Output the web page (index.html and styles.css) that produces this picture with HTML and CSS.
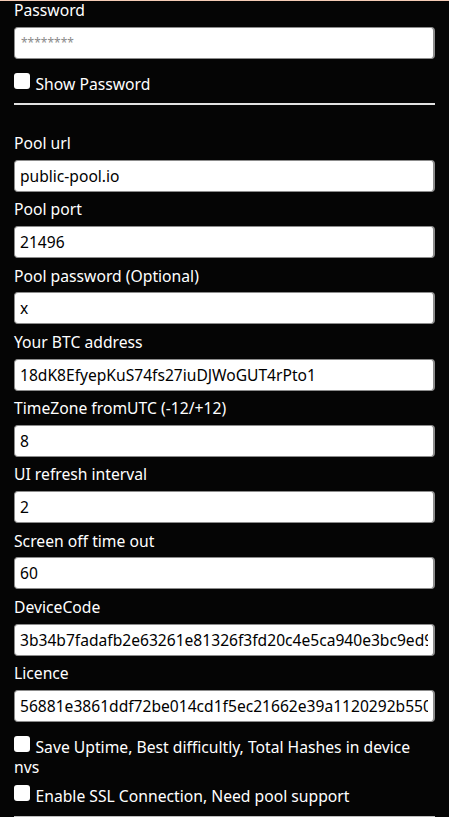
FILE: index.html
```html
<!DOCTYPE html>
<html>
<head>
<meta charset="utf-8">
<link rel="stylesheet" href="styles.css">
</head>
<body>
<div class="form">
  <label class="lbl first">Password</label>
  <input class="fld pwd" type="text" placeholder="********">
  <div class="check"><input type="checkbox" class="cb">Show Password</div>
  <hr class="sep">

  <label class="lbl">Pool url</label>
  <input class="fld" type="text" value="public-pool.io">
  <label class="lbl">Pool port</label>
  <input class="fld" type="text" value="21496">
  <label class="lbl">Pool password (Optional)</label>
  <input class="fld" type="text" value="x">
  <label class="lbl">Your BTC address</label>
  <input class="fld" type="text" value="18dK8EfyepKuS74fs27iuDJWoGUT4rPto1">
  <label class="lbl">TimeZone fromUTC (-12/+12)</label>
  <input class="fld" type="text" value="8">
  <label class="lbl">UI refresh interval</label>
  <input class="fld" type="text" value="2">
  <label class="lbl">Screen off time out</label>
  <input class="fld" type="text" value="60">
  <label class="lbl">DeviceCode</label>
  <input class="fld" type="text" value="3b34b7fadafb2e63261e81326f3fd20c4e5ca940e3bc9ed9a1">
  <label class="lbl">Licence</label>
  <input class="fld" type="text" value="56881e3861ddf72be014cd1f5ec21662e39a1120292b550a3c">

  <div class="check wrap"><input type="checkbox" class="cb">Save Uptime, Best difficultly, Total Hashes in device nvs</div>
  <div class="check next"><input type="checkbox" class="cb">Enable SSL Connection, Need pool support</div>
  <hr class="sep end">
</div>
</body>
</html>
```

FILE: styles.css
```css
html, body {
  margin: 0;
  padding: 0;
  background: #050505;
  overflow: hidden;
}
body {
  border-top: 1px solid #f4cbb6;
  height: 816px;
  font-family: "Noto Sans", "Liberation Sans", sans-serif;
  font-size: 15.7px;
  color: #ffffff;
}
.form {
  padding: 0 14px;
  display: flex;
  flex-direction: column;
}
.lbl {
  display: block;
  line-height: 22px;
  padding: 6.5px 0 5.75px;
  color: #ffffff;
}
.lbl.first {
  padding-top: 0;
  margin-top: -2.5px;
  padding-bottom: 6px;
}
.fld {
  box-sizing: border-box;
  width: 100%;
  height: 32px;
  margin: 0;
  padding: 0 5px;
  border: 1px solid #8c8c8c;
  border-right-width: 2px;
  border-radius: 4px;
  background: #ffffff;
  color: #000000;
  font-family: "Noto Sans", "Liberation Sans", sans-serif;
  font-size: 15.6px;
  outline: none;
}
.fld.pwd {
  font-size: 12px;
  padding-left: 6px;
}
.fld.pwd::placeholder {
  color: #8a8a8a;
}
.check {
  line-height: 20px;
  margin-top: 14px;
  color: #ffffff;
}
.check.wrap {
  margin-top: 14px;
}
.check.next {
  margin-top: 8px;
}
.cb {
  -webkit-appearance: none;
  appearance: none;
  display: inline-block;
  width: 16px;
  height: 16px;
  margin: 0 5.5px 1px 0;
  padding: 0;
  border: none;
  border-radius: 3px;
  background: #ffffff;
  vertical-align: baseline;
}
.sep {
  margin: 9.8px 0 20.4px;
  border: none;
  height: 2px;
  background: #e2e2e2;
}
.sep.end {
  margin: 10px 0 0;
  background: #bdbdbd;
}
```
